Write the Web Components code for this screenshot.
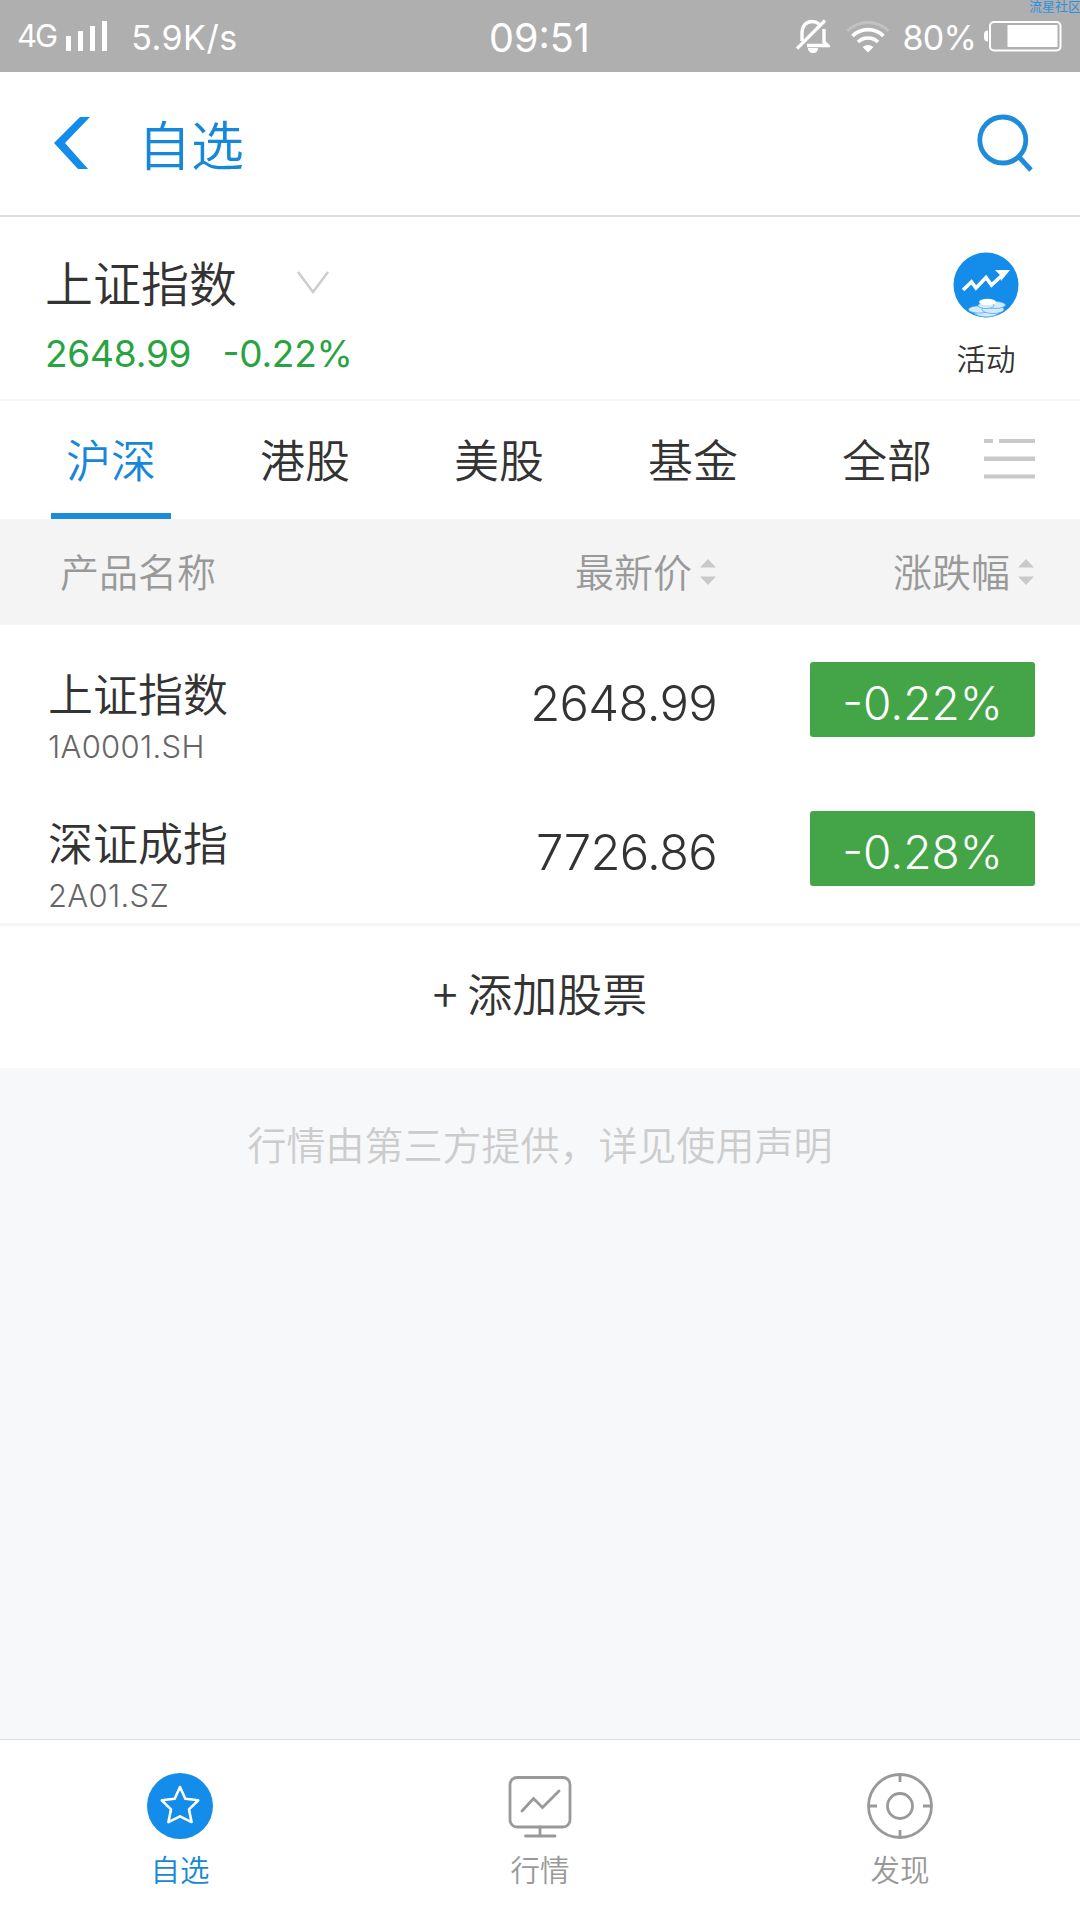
<!DOCTYPE html>
<html lang="zh-CN">
<head>
<meta charset="utf-8">
<title>自选</title>
<style>
  body {
    margin: 0;
    width: 1080px;
    height: 1920px;
    overflow: hidden;
    background: #f7f8fa;
    color: #333;
    font-family: Inter, "Noto Sans CJK SC", sans-serif;
    font-weight: 350;
    --blue: #1787da;
    --green: #44a548;
  }
</style>
</head>
<body>
<stock-app>
  <status-bar></status-bar>
  <nav-header>自选</nav-header>
  <index-summary name="上证指数" price="2648.99" change="-0.22%"></index-summary>
  <market-tabs>
    <market-tab active>沪深</market-tab>
    <market-tab>港股</market-tab>
    <market-tab>美股</market-tab>
    <market-tab>基金</market-tab>
    <market-tab>全部</market-tab>
  </market-tabs>
  <quote-head></quote-head>
  <quote-row name="上证指数" code="1A0001.SH" price="2648.99" change="-0.22%"></quote-row>
  <quote-row name="深证成指" code="2A01.SZ" price="7726.86" change="-0.28%"></quote-row>
  <add-stock>+ 添加股票</add-stock>
  <page-note>行情由第三方提供，详见使用声明</page-note>
  <tab-bar slot="footer">
    <tab-item active>
      <svg slot="icon" width="66" height="66" viewBox="0 0 66 66">
        <circle cx="33" cy="33" r="33" fill="#138cea"/>
        <path d="M33 14l5.300 11.700 12.900 1.600-9.200 9.100 2.600 12.700L33 43.300l-11.600 5.800L24 36.400l-9.200-9.100 12.900-1.600z" fill="none" stroke="#fff" stroke-width="2.600" stroke-linejoin="round"/>
      </svg>自选</tab-item>
    <tab-item>
      <svg slot="icon" width="66" height="66" viewBox="0 0 66 66" fill="none" stroke="#999" stroke-width="2.800" stroke-linecap="round">
        <rect x="3" y="4.500" width="60" height="49.500" rx="7"/>
        <path d="M15 38l11.500-12.500 9 9L52 18M33 54v8M18.500 63h29.500"/>
      </svg>行情</tab-item>
    <tab-item>
      <svg slot="icon" width="66" height="66" viewBox="0 0 66 66" fill="none" stroke="#999" stroke-width="2.800">
        <circle cx="33" cy="33" r="31.500"/>
        <circle cx="33" cy="33" r="12.500"/>
        <path d="M33 1v8M33 57v8M1 33h9M56 33h9"/>
      </svg>发现</tab-item>
  </tab-bar>
</stock-app>

<script>
// registers a tag whose shadow root is built from a html string
function define(tag, render) {
  customElements.define(tag, class extends HTMLElement {
    constructor() {
      super();
      this.attachShadow({mode: 'open'});
    }
    connectedCallback() {
      let tmpl = document.createElement('template');
      tmpl.innerHTML = render(this);
      this.shadowRoot.replaceChildren(tmpl.content.cloneNode(true));
    }
  });
}

define('stock-app', () => `
<style>
  :host { display: flex; flex-direction: column; height: 1920px; }
  .page { flex: 1; display: flex; flex-direction: column; min-height: 0; }
</style>
<div class="page"><slot></slot></div>
<slot name="footer"></slot>
`);

define('status-bar', () => `
<style>
  :host {
    position: relative;
    display: grid;
    grid-template-columns: 1fr auto 1fr;
    align-items: center;
    height: 72px;
    padding: 3px 18px 0 17px;
    box-sizing: border-box;
    background: #afafaf;
    color: #fff;
    font-size: 34px;
    line-height: 40px;
    font-weight: 400;
  }
  .left, .right { display: flex; align-items: center; }
  .right { justify-content: flex-end; }
  .net { font-size: 31px; letter-spacing: -2px; margin: -4px 10px 0 0; }
  .signal { margin: -3px 23px 0 0; }
  .speed { letter-spacing: .5px; }
  .time { font-size: 39.500px; }
  .bell { margin: -3px 16px 0 0; }
  .wifi { margin: -3px 13px 0 0; }
  .pct { letter-spacing: -.8px; margin-right: 8px; }
  .battery { margin-top: -3px; }
  .mark {
    position: absolute;
    top: -1px;
    right: -1px;
    font-size: 13px;
    line-height: 14px;
    color: #2f8fdd;
  }
</style>
<div class="left">
  <span class="net">4G</span>
  <svg class="signal" width="42" height="30" viewBox="0 0 42 30" fill="#fff">
    <path d="M0 15h5v15H0zM12 10h5v20h-5zM24 5h5v25h-5zM36 0h5v30h-5z"/>
  </svg>
  <span class="speed">5.9K/s</span>
</div>
<span class="time">09:51</span>
<div class="right">
  <svg class="bell" width="34" height="34" viewBox="0 0 34 34">
    <path d="M6 22V14C6 7 10 2.500 16 2.500c3 0 5 .8 7 2.500M28 10v13l3.500 3.500H11" fill="none" stroke="#fff" stroke-width="3.400"/>
    <path d="M1 29.500L29 1.500" stroke="#fff" stroke-width="3.200"/>
    <path d="M12 29h10c0 3-2 5-5 5s-5-2-5-5z" fill="#fff"/>
  </svg>
  <svg class="wifi" width="44" height="34" viewBox="0 0 44 34" fill="none" stroke="#fff" stroke-width="3.600">
    <path d="M1.500 12a29 29 0 0 1 41 0" stroke="#c2c2c2" stroke-width="3"/>
    <path d="M6.500 17a22 22 0 0 1 31 0M12 23a14.500 14.500 0 0 1 20 0"/>
    <path d="M22 33.500l-5.500-5.500q5.500-4 11 0z" fill="#fff" stroke="none"/>
  </svg>
  <span class="pct">80%</span>
  <svg class="battery" width="78" height="32" viewBox="0 0 78 32">
    <rect x="6" y="2" width="70.500" height="28.500" rx="4" fill="none" stroke="#fff" stroke-width="2"/>
    <path d="M23.500 5h50v22h-50zM4 10.500v11q-4 0-4-4v-3q0-4 4-4z" fill="#fff"/>
  </svg>
</div>
<span class="mark">流星社区</span>
`);

define('nav-header', () => `
<style>
  :host {
    display: flex;
    align-items: center;
    height: 145px;
    padding: 0 47px 0 53px;
    box-sizing: border-box;
    border-bottom: 2px solid #ddd;
    background: #fff;
    color: var(--blue);
  }
  .back { margin-top: -1px; }
  .title { flex: 1; margin: 7px 0 0 47px; font-size: 53px; line-height: 60px; }
  .search { margin-top: -2px; }
</style>
<svg class="back" width="38" height="52" viewBox="0 0 38 52" fill="#138cea">
  <path d="M27 0h10L12 26l23 26H25L1 26z"/>
</svg>
<span class="title"><slot></slot></span>
<svg class="search" width="56" height="58" viewBox="0 0 56 58" fill="none" stroke="#1e8bdb" stroke-width="4.800">
  <circle cx="25.800" cy="26" r="23"/>
  <path d="M42 43l12 13"/>
</svg>
`);

define('index-summary', el => `
<style>
  :host {
    display: flex;
    justify-content: space-between;
    height: 184px;
    padding: 0 61px 0 45px;
    box-sizing: border-box;
    border-top: 2px solid #fff;
    border-bottom: 2px solid #f5f5f5;
    background: #fff;
  }
  .name { display: flex; align-items: center; gap: 60px; margin-top: 36px; font-size: 48px; line-height: 60px; }
  .name svg { margin-top: -6px; }
  .nums { display: flex; gap: 31px; margin-top: 15px; font-size: 37px; line-height: 48px; letter-spacing: -.2px; font-weight: 400; color: #27a441; font-feature-settings: "case"; }
  .activity { display: flex; flex-direction: column; align-items: center; padding-top: 33px; font-size: 29.500px; line-height: 36px; }
  .activity span { margin-top: 23px; }
</style>
<div>
  <div class="name">${el.getAttribute('name')}
    <svg width="32" height="23" viewBox="0 0 32 23"><path d="M1 1l15 20L31 1" fill="none" stroke="#ccc" stroke-width="2.500"/></svg>
  </div>
  <div class="nums"><span>${el.getAttribute('price')}</span><span>${el.getAttribute('change')}</span></div>
</div>
<div class="activity">
  <svg width="66" height="66" viewBox="0 0 66 66">
    <circle cx="33" cy="33" r="32.500" fill="#138cea"/>
    <path d="M10 38l8.500-8 4.500 6L33 25.500l5.500 7.500L51 21.500" fill="none" stroke="#fff" stroke-width="3.600"/>
    <path d="M42 18h15L48 29l-1-6z" fill="#fff"/>
    <g fill="#d3ebff" stroke="#4fa8ee" stroke-width=".8">
      <path d="M19.500 60.500q6 4.500 14 4.500t13-4q-6-3-13-3t-14 2.500z"/>
      <ellipse cx="26" cy="57.500" rx="10.500" ry="3.600"/>
      <ellipse cx="40" cy="57.500" rx="11" ry="4"/>
      <ellipse cx="42" cy="53" rx="10.500" ry="3.500"/>
      <ellipse cx="33" cy="53.500" rx="8" ry="3"/>
    </g>
    <ellipse cx="34.500" cy="50" rx="8.500" ry="3.200" fill="#fff"/>
  </svg>
  <span>活动</span>
</div>
`);

define('market-tabs', () => `
<style>
  :host { display: flex; height: 118px; padding: 0 45px 0 14px; background: #fff; }
  .tabs { flex: 1; display: flex; }
  svg { margin-top: 38px; }
</style>
<div class="tabs"><slot></slot></div>
<svg width="51" height="40" viewBox="0 0 51 40" fill="#c9c9c9">
  <path d="M0 0h9v4H0zM15 0h36v4H15zM0 17.500h51v4.500H0zM0 35.500h51v4H0z"/>
</svg>
`);

define('market-tab', () => `
<style>
  :host {
    display: flex;
    justify-content: center;
    width: 194px;
    font-size: 45px;
    line-height: 121px;
  }
  span { width: 120px; height: 118px; box-sizing: border-box; text-align: center; }
  :host([active]) span { color: var(--blue); border-bottom: 6px solid #1b8bdb; }
</style>
<span><slot></slot></span>
`);

define('quote-head', () => `
<style>
  :host {
    display: grid;
    grid-template-columns: 1fr 321px 318px;
    align-items: center;
    height: 106px;
    padding: 0 45px 0 60px;
    background: #f4f4f4;
    color: #999;
    font-size: 39px;
    line-height: 50px;
  }
  .label { padding-top: 2px; }
  .sort { display: flex; justify-content: flex-end; align-items: center; gap: 8px; }
  svg { margin-right: 1px; }
</style>
<span class="label">产品名称</span>
${['最新价', '涨跌幅'].map(label => `
<span class="sort"><span class="label">${label}</span>
  <svg width="16" height="26" viewBox="0 0 16 26" fill="#c9c9c9"><path d="M0 8.500L8 0l8 8.500zM0 17.500h16L8 26z"/></svg>
</span>`).join('')}
`);

define('quote-row', el => `
<style>
  :host {
    display: grid;
    grid-template-columns: 1fr 322px 318px;
    height: 149px;
    padding: 0 45px 0 48px;
    background: #fff;
  }
  .name { margin-top: 43px; font-size: 45px; line-height: 56px; }
  .code { margin-top: 3px; font-size: 31px; line-height: 40px; letter-spacing: .3px; font-weight: 300; color: #666; }
  .price { margin-top: 49px; font-size: 49px; line-height: 60px; letter-spacing: -.7px; font-weight: 300; text-align: right; }
  .change {
    justify-self: end;
    width: 225px;
    height: 75px;
    margin-top: 37px;
    padding-top: 7px;
    box-sizing: border-box;
    border-radius: 3px;
    background: var(--green);
    color: #fff;
    font-size: 46px;
    font-weight: 300;
    line-height: 69px;
    text-align: center;
    font-feature-settings: "case";
  }
</style>
<div>
  <div class="name">${el.getAttribute('name')}</div>
  <div class="code">${el.getAttribute('code')}</div>
</div>
<div class="price">${el.getAttribute('price')}</div>
<div class="change">${el.getAttribute('change')}</div>
`);

// the plus comes from the CJK face so that it sits level with the characters
define('add-stock', () => `
<style>
  :host {
    display: block;
    height: 145px;
    box-sizing: border-box;
    border-top: 3px solid #f5f5f5;
    background: #fff;
    font-family: "Noto Sans CJK SC", sans-serif;
    font-size: 45px;
    line-height: 133px;
    text-align: center;
  }
</style>
<slot></slot>
`);

define('page-note', () => `
<style>
  :host { display: block; padding-top: 53px; font-size: 39px; line-height: 50px; text-align: center; color: #ccc; }
</style>
<slot></slot>
`);

define('tab-bar', () => `
<style>
  :host { display: grid; grid-template-columns: repeat(3, 1fr); height: 180px; border-top: 1px solid #dcdce3; background: #fff; }
</style>
<slot></slot>
`);

define('tab-item', () => `
<style>
  :host { display: flex; flex-direction: column; align-items: center; padding-top: 33px; color: #999; font-size: 29.500px; line-height: 36px; }
  :host([active]) { color: var(--blue); }
  span { margin-top: 13px; }
</style>
<slot name="icon"></slot>
<span><slot></slot></span>
`);
</script>
</body>
</html>
